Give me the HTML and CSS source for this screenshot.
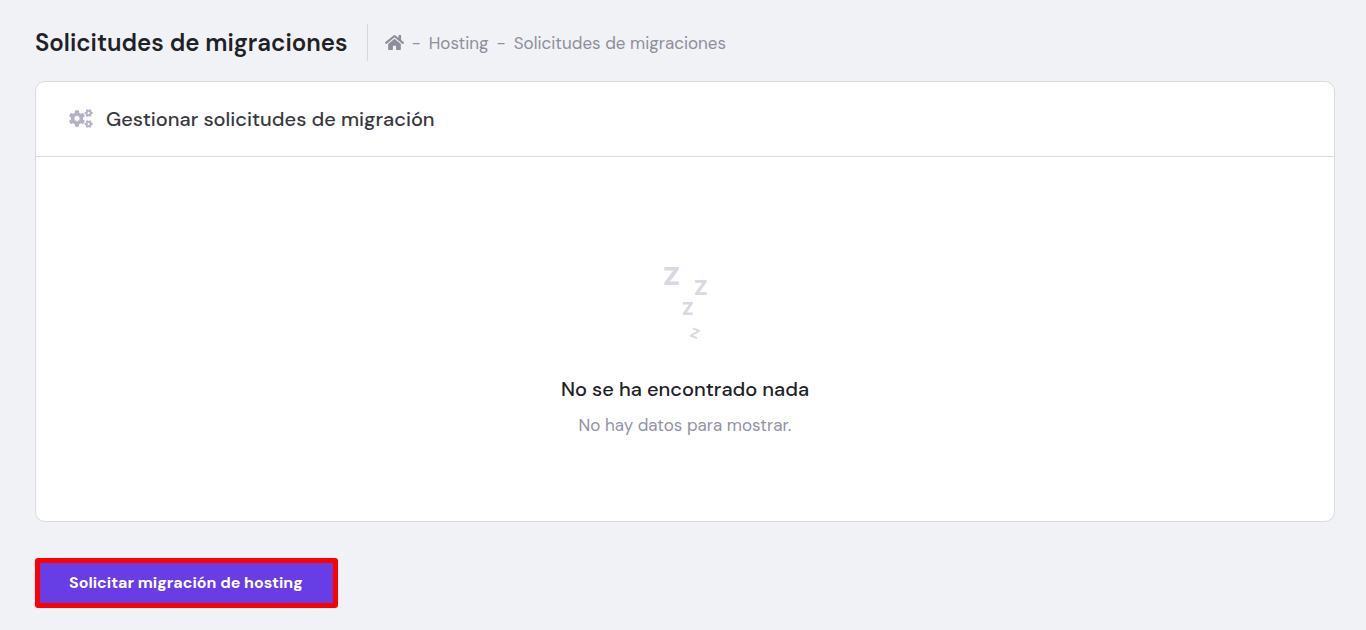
FILE: index.html
```html
<!DOCTYPE html>
<html lang="es">
<head>
<meta charset="utf-8">
<meta name="viewport" content="width=device-width, initial-scale=1">
<title>Solicitudes de migraciones</title>
<link rel="stylesheet" href="styles.css">
</head>
<body>
<main class="page">
  <header class="page-header">
    <h1 class="page-title">Solicitudes de migraciones</h1>
    <nav class="breadcrumb" aria-label="Ruta">
      <a class="crumb-home" href="#" aria-label="Inicio"><svg class="icon-home" viewBox="0 0 576 512" aria-hidden="true"><path d="M280.37 148.26L96 300.11V464a16 16 0 0 0 16 16l112.06-.29a16 16 0 0 0 15.92-16V368a16 16 0 0 1 16-16h64a16 16 0 0 1 16 16v95.64a16 16 0 0 0 16 16.05L464 480a16 16 0 0 0 16-16V300L295.67 148.26a12.19 12.19 0 0 0-15.3 0zM571.6 251.47L488 182.56V44.05a12 12 0 0 0-12-12h-56a12 12 0 0 0-12 12v72.61L318.47 43a48 48 0 0 0-61 0L4.34 251.47a12 12 0 0 0-1.6 16.9l25.5 31A12 12 0 0 0 45.15 301l235.22-193.74a12.19 12.19 0 0 1 15.3 0L530.9 301a12 12 0 0 0 16.9-1.6l25.5-31a12 12 0 0 0-1.7-16.93z"/></svg></a>
      <span>-</span>
      <a href="#">Hosting</a>
      <span>-</span>
      <span>Solicitudes de migraciones</span>
    </nav>
  </header>

  <section class="card">
    <div class="card-header">
      <svg class="icon-cogs" viewBox="0 0 24 20" aria-hidden="true">
        <defs>
          <g id="gear">
            <circle r="4.6" fill="none" stroke-width="3.2"/>
            <g stroke="none">
              <rect x="-2" y="-8.2" width="4" height="16.4" rx="1" mask="url(#hub)"/>
              <rect x="-2" y="-8.2" width="4" height="16.4" rx="1" transform="rotate(60)" mask="url(#hub)"/>
              <rect x="-2" y="-8.2" width="4" height="16.4" rx="1" transform="rotate(120)" mask="url(#hub)"/>
            </g>
          </g>
          <mask id="hub" maskUnits="userSpaceOnUse" x="-9" y="-9" width="18" height="18">
            <rect x="-9" y="-9" width="18" height="18" fill="#fff"/>
            <circle r="3.1" fill="#000"/>
          </mask>
        </defs>
        <use href="#gear" transform="translate(8 9.5)"/>
        <use href="#gear" transform="translate(19.6 4) rotate(30) scale(.5)"/>
        <use href="#gear" transform="translate(19.6 15) rotate(30) scale(.5)"/>
      </svg>
      <h2 class="card-title">Gestionar solicitudes de migración</h2>
    </div>
    <div class="empty">
      <svg class="empty-art" viewBox="0 0 56 82" aria-hidden="true">
        <text x="6" y="23" font-size="25">Z</text>
        <text x="37" y="33" font-size="20">Z</text>
        <text x="25" y="53" font-size="17">Z</text>
        <text transform="translate(32 74) rotate(22)" font-size="13">Z</text>
      </svg>
      <h3 class="empty-title">No se ha encontrado nada</h3>
      <p class="empty-text">No hay datos para mostrar.</p>
    </div>
  </section>

  <button class="action" type="button">Solicitar migración de hosting</button>
</main>
</body>
</html>
```
FILE: styles.css
```css
* {
  box-sizing: border-box;
}

body {
  margin: 0;
  background: #f1f2f6;
  color: #1e2126;
  font-family: "DM Sans", Inter, "Liberation Sans", sans-serif;
  font-size: 17px;
  line-height: 24px;
}

h1, h2, h3, p {
  margin: 0;
}

a {
  color: inherit;
  text-decoration: none;
}

.page {
  padding: 24px 31px 22px 35px;
}

.page-header {
  display: flex;
  align-items: center;
  margin-bottom: 20px;
}

.page-title {
  padding-right: 19px;
  font-size: 24px;
  font-weight: 600;
  line-height: 37px;
}

.breadcrumb {
  display: flex;
  align-items: center;
  gap: 8px;
  height: 37px;
  padding-left: 17px;
  border-left: 1px solid #d6d7dc;
  color: #8d8e9c;
}

.crumb-home {
  display: flex;
}

.icon-home {
  width: 19px;
  height: 17px;
  fill: #8d8e9c;
}

.card {
  background: #fff;
  border: 1px solid #dadbdf;
  border-radius: 10px;
}

.card-header {
  display: flex;
  align-items: center;
  gap: 13px;
  padding: 25px 33px;
  border-bottom: 1px solid #dadbdf;
}

.icon-cogs {
  width: 24px;
  height: 20px;
  fill: #b4b2c8;
  stroke: #b4b2c8;
}

.card-title {
  color: #38393f;
  font-size: 20px;
  font-weight: 500;
  line-height: 24px;
}

.empty {
  display: flex;
  flex-direction: column;
  align-items: center;
  padding: 105px 24px 84px;
  text-align: center;
}

.empty-art {
  width: 56px;
  height: 82px;
  margin-bottom: 33px;
  overflow: visible;
  fill: #d9dae1;
  font-family: Inter, "Liberation Sans", sans-serif;
  font-weight: 800;
}

.empty-title {
  margin-bottom: 12px;
  font-size: 20px;
  font-weight: 500;
  line-height: 24px;
}

.empty-text {
  color: #9293a3;
}

.action {
  margin-top: 36px;
  padding: 8px 30px 8px 29px;
  border: 5px solid #f00;
  border-radius: 3px;
  background: #673de6;
  color: #fff;
  font: inherit;
  font-size: 16px;
  font-weight: 700;
}
```
